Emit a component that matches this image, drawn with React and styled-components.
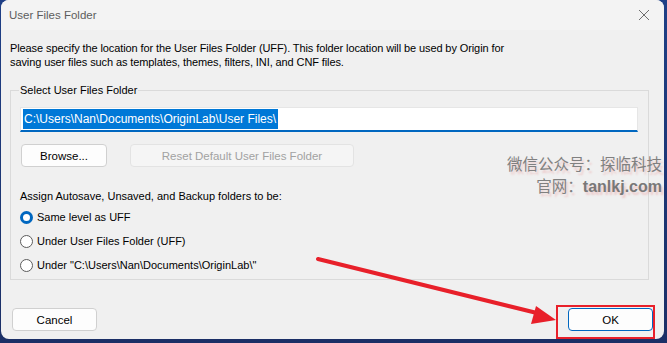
import styled, { createGlobalStyle } from "styled-components"

const Global = createGlobalStyle`
  html, body { margin: 0; padding: 0; }
  body {
    width: 667px;
    height: 343px;
    overflow: hidden;
    background: #1d3770;
    font-family: "Liberation Sans", Arial, sans-serif;
  }
`

const Screen = styled.div`
  width: 667px;
  height: 343px;
  padding: 0 3px 4px 1px;
  box-sizing: border-box;
  background: linear-gradient(180deg, #1e3f86 0%, #1b2f66 100%);
`

const Window = styled.div`
  position: relative;
  width: 100%;
  height: 100%;
  background: #f0f0f0;
  border-radius: 8px;
  overflow: hidden;
  display: flex;
  flex-direction: column;
  font-size: 11px;
  color: #000;
`

const TitleBar = styled.div`
  height: 30px;
  flex: none;
  display: flex;
  align-items: center;
  justify-content: space-between;
  padding: 0 14px 0 8px;
  background: #f3f3f3;
  color: #5d5d5d;
  font-size: 11.5px;
`

const Body = styled.div`
  flex: 1;
  display: flex;
  flex-direction: column;
  padding: 11px 15px 0 9px;
`

const Intro = styled.p`
  margin: 0;
  line-height: 14px;
  letter-spacing: -0.1px;
`

const Group = styled.fieldset`
  margin: 15px 0 0 0;
  padding: 11px 10px 0 9px;
  height: 196px;
  box-sizing: border-box;
  border: 1px solid #dadada;
  display: flex;
  flex-direction: column;
`

const Legend = styled.legend`
  padding: 0 1px;
  margin-left: -1px;
  font-size: 11px;
`

const PathInput = styled.div`
  height: 25px;
  box-sizing: border-box;
  background: #fff;
  border: 1px solid #e6e6e6;
  border-bottom: 2px solid #0067c0;
  display: flex;
  align-items: center;
  padding-left: 2px;
  font-size: 12px;
`

const Selected = styled.span`
  background: #0078d7;
  color: #fff;
  line-height: 20px;
  padding: 0 2px 0 1px;
`

const ButtonRow = styled.div`
  display: flex;
  gap: 23px;
  margin-top: 12px;
  padding-left: 1px;
`

const Button = styled.div`
  width: ${p => p.$w}px;
  height: 23px;
  box-sizing: border-box;
  border: 1px solid ${p => (p.$disabled ? "#e3e3e3" : p.$primary ? "#0067c0" : "#d0d0d0")};
  border-radius: 4px;
  background: ${p => (p.$disabled ? "#f5f5f5" : "#fdfdfd")};
  color: ${p => (p.$disabled ? "#a2a2a2" : "#000")};
  display: flex;
  align-items: center;
  justify-content: center;
  font-size: 11.5px;
`

const Assign = styled.div`
  margin-top: 22px;
  line-height: 14px;
`

const RadioList = styled.div`
  display: flex;
  flex-direction: column;
  gap: 10px;
  margin-top: 7px;
`

const RadioRow = styled.label`
  display: flex;
  align-items: center;
  gap: 4px;
  height: 14px;
  font-size: 11px;
`

const Dot = styled.span`
  width: 13px;
  height: 13px;
  box-sizing: border-box;
  border-radius: 50%;
  flex: none;
  ${p =>
    p.$on
      ? "border: 3.5px solid #0067c0; background: #fff;"
      : "border: 1px solid #5c5c5c; background: #fff;"}
`

const Footer = styled.div`
  display: flex;
  justify-content: space-between;
  align-items: center;
  margin: 28px -4px 0 2px;
`

const Watermark = styled.div`
  position: absolute;
  right: 2px;
  top: 152px;
  text-align: right;
  font-family: "Noto Sans CJK SC", "Liberation Sans", sans-serif;
  font-size: 15.5px;
  line-height: 22px;
  color: #808080;
  text-shadow: 2px 3px 2px rgba(232, 120, 120, 0.3);
  b {
    font-family: "Liberation Sans", sans-serif;
    font-weight: bold;
    font-size: 16px;
    color: #787878;
  }
`

const Highlight = styled.div`
  position: absolute;
  left: 555px;
  top: 305px;
  width: 99px;
  height: 34px;
  box-sizing: border-box;
  border: 2px solid #e8202a;
`

const Overlay = styled.svg`
  position: absolute;
  left: 0;
  top: 0;
  pointer-events: none;
`

const Close = () => (
  <svg width="12" height="12" viewBox="0 0 12 12">
    <path d="M1 1 L11 11 M11 1 L1 11" stroke="#6e6e6e" strokeWidth="1" />
  </svg>
)

const App = () => {
  return (
    <>
      <Global />
      <Screen>
        <Window>
          <TitleBar>
            <span>User Files Folder</span>
            <Close />
          </TitleBar>
          <Body>
            <Intro>
              Please specify the location for the User Files Folder (UFF). This folder location will be used by Origin for
              <br />
              saving user files such as templates, themes, filters, INI, and CNF files.
            </Intro>
            <Group>
              <Legend>Select User Files Folder</Legend>
              <PathInput>
                <Selected>C:\Users\Nan\Documents\OriginLab\User Files\</Selected>
              </PathInput>
              <ButtonRow>
                <Button $w={86}>Browse...</Button>
                <Button $w={224} $disabled>Reset Default User Files Folder</Button>
              </ButtonRow>
              <Assign>Assign Autosave, Unsaved, and Backup folders to be:</Assign>
              <RadioList>
                <RadioRow><Dot $on />Same level as UFF</RadioRow>
                <RadioRow><Dot />Under User Files Folder (UFF)</RadioRow>
                <RadioRow><Dot />Under "C:\Users\Nan\Documents\OriginLab\"</RadioRow>
              </RadioList>
            </Group>
            <Footer>
              <Button $w={85}>Cancel</Button>
              <Button $w={85} $primary>OK</Button>
            </Footer>
          </Body>
          <Watermark>
            微信公众号：探临科技
            <br />
            官网：<b>tanlkj.com</b>
          </Watermark>
          <Highlight />
          <Overlay width="663" height="339" viewBox="0 0 663 339">
            <line x1="317" y1="259" x2="540" y2="314" stroke="#e8202a" strokeWidth="4" strokeLinecap="round" />
            <polygon points="555,320 535,306 530,324" fill="#e8202a" />
          </Overlay>
        </Window>
      </Screen>
    </>
  )
}

export default App
